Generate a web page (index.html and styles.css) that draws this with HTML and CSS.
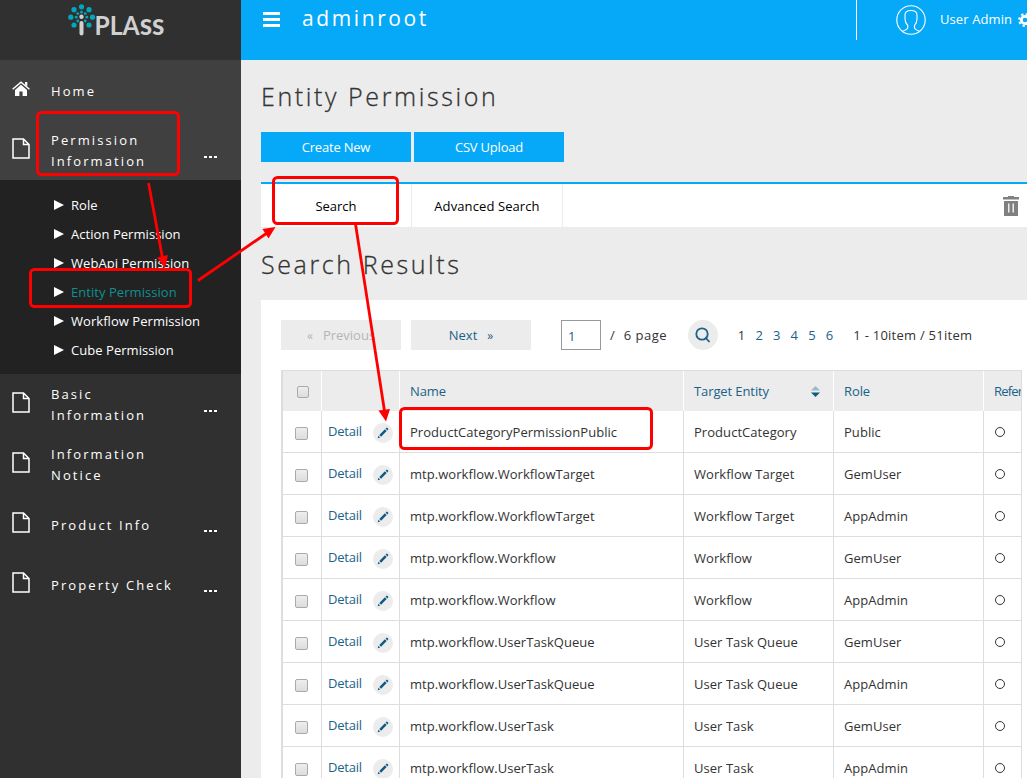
FILE: index.html
```html
<!DOCTYPE html>
<html lang="en">
<head>
    <meta charset="UTF-8">
    <meta name="viewport" content="width=device-width, initial-scale=1.0">
    <title>Entity Permission</title>
    <link rel="stylesheet" href="styles.css">
</head>
<body>
    <!-- shared icons -->
    <svg class="icon-defs">
        <symbol id="icon-doc" viewBox="0 0 18 21">
            <path d="M1 1h10.500l5.500 5.500V20H1zM11.500 1v5.500H17" fill="none" stroke="#fff" stroke-width="1.500"/>
        </symbol>
        <symbol id="icon-pen" viewBox="0 0 12 12">
            <path d="M.8 11.200l.6-2.400L3.200 10.600zM2.300 7.900L7.900 2.300 9.700 4.100 4.100 9.700zM8.600 1.600L9.500.7Q10 .4 10.500.9L11.100 1.500Q11.600 2 11.200 2.500L10.400 3.400z" fill="#0f5b85"/>
        </symbol>
    </svg>

    <div class="page">
        <aside class="sidebar">
            <div class="logo">
                <svg width="110" height="40" viewBox="0 0 110 40">
                    <g fill="#00a7bd">
                        <circle cx="15.500" cy="2.800" r="2.600"/>
                        <circle cx="8" cy="5.700" r="2.600"/>
                        <circle cx="23" cy="5.700" r="2.600"/>
                        <circle cx="4.800" cy="13.200" r="2.600"/>
                        <circle cx="26.500" cy="13.200" r="2.600"/>
                        <circle cx="8" cy="21" r="2.600"/>
                        <circle cx="23" cy="21" r="2.600"/>
                        <circle cx="15.500" cy="8" r="1.500"/>
                        <circle cx="11.800" cy="9.600" r="1.400"/>
                        <circle cx="19.200" cy="9.600" r="1.400"/>
                        <circle cx="10.200" cy="13.200" r="1.400"/>
                        <circle cx="20.800" cy="13.200" r="1.400"/>
                        <circle cx="11.800" cy="17" r="1.400"/>
                        <circle cx="19.200" cy="17" r="1.400"/>
                    </g>
                    <circle cx="15.500" cy="12.800" r="2.200" fill="#d0d0d0"/>
                    <path d="M15.500 19v10.500" stroke="#d0d0d0" stroke-width="4" stroke-linecap="round"/>
                    <text class="logo-text" x="28.500" y="31" textLength="70" lengthAdjust="spacingAndGlyphs">PLA<tspan class="logo-small">ss</tspan></text>
                </svg>
            </div>
            <nav class="menu">
                <a class="menu-item active">
                    <svg class="menu-icon home" width="18" height="16" viewBox="0 0 18 16">
                        <path d="M9 3.800L15 9v6h-4.400v-4.500H7.400V15H3V9z" fill="#fff"/>
                        <path d="M.6 8.300L9 1.200l8.400 7.100" fill="none" stroke="#fff" stroke-width="1.500"/>
                        <path d="M13 1h2.300v4.500L13 3.500z" fill="#fff"/>
                    </svg>
                    <span class="menu-label">Home</span>
                </a>
                <a class="menu-item active">
                    <svg class="menu-icon"><use href="#icon-doc"/></svg>
                    <span class="menu-label">Permission Information</span>
                    <span class="more"><i></i><i></i><i></i></span>
                </a>
                <ul class="submenu">
                    <li>Role</li>
                    <li>Action Permission</li>
                    <li>WebApi Permission</li>
                    <li class="current">Entity Permission</li>
                    <li>Workflow Permission</li>
                    <li>Cube Permission</li>
                </ul>
                <a class="menu-item">
                    <svg class="menu-icon"><use href="#icon-doc"/></svg>
                    <span class="menu-label">Basic Information</span>
                    <span class="more"><i></i><i></i><i></i></span>
                </a>
                <a class="menu-item">
                    <svg class="menu-icon"><use href="#icon-doc"/></svg>
                    <span class="menu-label">Information Notice</span>
                </a>
                <a class="menu-item">
                    <svg class="menu-icon"><use href="#icon-doc"/></svg>
                    <span class="menu-label">Product Info</span>
                    <span class="more"><i></i><i></i><i></i></span>
                </a>
                <a class="menu-item">
                    <svg class="menu-icon"><use href="#icon-doc"/></svg>
                    <span class="menu-label">Property Check</span>
                    <span class="more"><i></i><i></i><i></i></span>
                </a>
            </nav>
        </aside>

        <div class="main">
            <header class="topbar">
                <div class="burger"><i></i><i></i><i></i></div>
                <div class="tenant">adminroot</div>
                <div class="user">
                    <svg class="avatar" width="30" height="30" viewBox="0 0 30 30" fill="none" stroke="#fff" stroke-width="1.100">
                        <circle cx="15" cy="15" r="14.200"/>
                        <path d="M6.500 26.300Q11.800 24.500 11.800 22.500V20.500Q9 17.500 9 14V10Q9 5.500 15 5.500T21 10V14Q21 17.500 18.500 20.500V22.500Q18.500 24.500 23.500 26.300"/>
                    </svg>
                    <span class="user-name">User Admin</span>
                    <svg class="gear" width="14" height="14" viewBox="0 0 14 14" fill="none" stroke="#fff">
                        <circle cx="7" cy="7" r="3.700" stroke-width="2.800"/>
                        <circle cx="7" cy="7" r="5.900" stroke-width="2" stroke-dasharray="2.300 2.330"/>
                    </svg>
                </div>
            </header>

            <main class="content">
                <h2>Entity Permission</h2>
                <div class="actions">
                    <a class="btn">Create New</a>
                    <a class="btn">CSV Upload</a>
                </div>
                <div class="tabs">
                    <a class="tab">Search</a>
                    <a class="tab advanced">Advanced Search</a>
                    <svg class="trash" width="16" height="20" viewBox="0 0 16 20">
                        <path d="M0 1h5V0h6v1h5v2.500H0zM1 5h14v15H1z" fill="#808080"/>
                        <path d="M5.800 7.500v9M10.200 7.500v9" stroke="#fff" stroke-width="1.300"/>
                    </svg>
                </div>
                <h2 class="results-title">Search Results</h2>

                <div class="panel">
                    <div class="pager">
                        <a class="page-btn disabled"><small>«</small><span>Previous</span></a>
                        <a class="page-btn next"><span>Next</span><small>»</small></a>
                        <input class="page-no" type="text" value="1">
                        <span class="slash">/</span>
                        <span class="page-total">6 page</span>
                        <a class="go">
                            <svg width="16" height="16" viewBox="0 0 16 16" fill="none" stroke="#1a6288" stroke-width="1.800">
                                <circle cx="7" cy="7" r="5.700"/>
                                <path d="M10.300 10.300L14.500 15"/>
                            </svg>
                        </a>
                        <div class="page-links"><a class="on">1</a><a>2</a><a>3</a><a>4</a><a>5</a><a>6</a></div>
                        <span class="count">1 - 10item / 51item</span>
                    </div>

                    <div class="grid">
                        <table>
                            <thead>
                                <tr>
                                    <th class="check"><input type="checkbox"></th>
                                    <th class="link"></th>
                                    <th class="name">Name</th>
                                    <th class="target">
                                        <div class="sortable">Target Entity
                                            <svg width="9" height="11" viewBox="0 0 9 11">
                                                <path d="M0 4.500L4.500 0 9 4.500z" fill="#9db9c8"/>
                                                <path d="M0 6.500h9L4.500 11z" fill="#0f5b85"/>
                                            </svg>
                                        </div>
                                    </th>
                                    <th class="role">Role</th>
                                    <th class="ref">Refer</th>
                                </tr>
                            </thead>
                            <tbody>
                                <tr>
                                    <td class="check"><input type="checkbox"></td>
                                    <td class="link"><div><a>Detail</a><span class="edit"><svg><use href="#icon-pen"/></svg></span></div></td>
                                    <td>ProductCategoryPermissionPublic</td>
                                    <td>ProductCategory</td>
                                    <td>Public</td>
                                    <td><i class="ring"></i></td>
                                </tr>
                                <tr>
                                    <td class="check"><input type="checkbox"></td>
                                    <td class="link"><div><a>Detail</a><span class="edit"><svg><use href="#icon-pen"/></svg></span></div></td>
                                    <td>mtp.workflow.WorkflowTarget</td>
                                    <td>Workflow Target</td>
                                    <td>GemUser</td>
                                    <td><i class="ring"></i></td>
                                </tr>
                                <tr>
                                    <td class="check"><input type="checkbox"></td>
                                    <td class="link"><div><a>Detail</a><span class="edit"><svg><use href="#icon-pen"/></svg></span></div></td>
                                    <td>mtp.workflow.WorkflowTarget</td>
                                    <td>Workflow Target</td>
                                    <td>AppAdmin</td>
                                    <td><i class="ring"></i></td>
                                </tr>
                                <tr>
                                    <td class="check"><input type="checkbox"></td>
                                    <td class="link"><div><a>Detail</a><span class="edit"><svg><use href="#icon-pen"/></svg></span></div></td>
                                    <td>mtp.workflow.Workflow</td>
                                    <td>Workflow</td>
                                    <td>GemUser</td>
                                    <td><i class="ring"></i></td>
                                </tr>
                                <tr>
                                    <td class="check"><input type="checkbox"></td>
                                    <td class="link"><div><a>Detail</a><span class="edit"><svg><use href="#icon-pen"/></svg></span></div></td>
                                    <td>mtp.workflow.Workflow</td>
                                    <td>Workflow</td>
                                    <td>AppAdmin</td>
                                    <td><i class="ring"></i></td>
                                </tr>
                                <tr>
                                    <td class="check"><input type="checkbox"></td>
                                    <td class="link"><div><a>Detail</a><span class="edit"><svg><use href="#icon-pen"/></svg></span></div></td>
                                    <td>mtp.workflow.UserTaskQueue</td>
                                    <td>User Task Queue</td>
                                    <td>GemUser</td>
                                    <td><i class="ring"></i></td>
                                </tr>
                                <tr>
                                    <td class="check"><input type="checkbox"></td>
                                    <td class="link"><div><a>Detail</a><span class="edit"><svg><use href="#icon-pen"/></svg></span></div></td>
                                    <td>mtp.workflow.UserTaskQueue</td>
                                    <td>User Task Queue</td>
                                    <td>AppAdmin</td>
                                    <td><i class="ring"></i></td>
                                </tr>
                                <tr>
                                    <td class="check"><input type="checkbox"></td>
                                    <td class="link"><div><a>Detail</a><span class="edit"><svg><use href="#icon-pen"/></svg></span></div></td>
                                    <td>mtp.workflow.UserTask</td>
                                    <td>User Task</td>
                                    <td>GemUser</td>
                                    <td><i class="ring"></i></td>
                                </tr>
                                <tr>
                                    <td class="check"><input type="checkbox"></td>
                                    <td class="link"><div><a>Detail</a><span class="edit"><svg><use href="#icon-pen"/></svg></span></div></td>
                                    <td>mtp.workflow.UserTask</td>
                                    <td>User Task</td>
                                    <td>AppAdmin</td>
                                    <td><i class="ring"></i></td>
                                </tr>
                            </tbody>
                        </table>
                    </div>
                </div>
            </main>
        </div>
    </div>

    <!-- walkthrough marks -->
    <svg class="marks" width="1027" height="778" viewBox="0 0 1027 778">
        <g fill="none" stroke="#f00" stroke-width="3">
            <rect x="37.500" y="112.500" width="141" height="62" rx="4"/>
            <rect x="30.500" y="269.500" width="160" height="37" rx="4"/>
            <rect x="273.500" y="177.500" width="124" height="46" rx="4"/>
            <rect x="400.500" y="408.500" width="251" height="40" rx="4"/>
        </g>
        <g stroke="#f00" stroke-width="2.800">
            <path d="M148.500 183L162.500 258M198 280.500L267 233M355.500 224L384.500 411"/>
        </g>
        <g fill="#f00">
            <path d="M157 257.500L168 255L165 268z"/>
            <path d="M262.500 229L275.500 227L268.500 238.500z"/>
            <path d="M378.500 410.500L390 409L386 421.500z"/>
        </g>
    </svg>
</body>
</html>
```
FILE: styles.css
```css
* {
    box-sizing: border-box;
}
body {
    margin: 0;
    height: 778px;
    overflow: hidden;
    background: #ececec;
    color: #333;
    font-family: "Open Sans", "Noto Sans", sans-serif;
    font-size: 13px;
}
.icon-defs {
    display: none;
}
.page {
    display: flex;
    height: 778px;
}

/* sidebar */
.sidebar {
    flex: none;
    width: 241px;
    background: #303030;
    color: #fff;
}
.logo {
    height: 60px;
    padding: 4px 0 0 66px;
}
.logo svg {
    display: block;
    overflow: visible;
}
.logo-text {
    font-family: "Lato", sans-serif;
    font-size: 27px;
    font-weight: bold;
    fill: #d0d0d0;
}
.logo-small {
    font-size: 31px;
}
.menu-item {
    display: flex;
    height: 60px;
    padding: 0 24px 0 12px;
    align-items: center;
}
.menu-item.active {
    background: #404040;
}
.menu-icon {
    flex: none;
    width: 18px;
    height: 21px;
    margin-top: -3px;
}
.menu-icon.home {
    height: 16px;
}
.menu-label {
    width: 130px;
    margin-left: 21px;
    padding-top: 2px;
    line-height: 21px;
    letter-spacing: 2.1px;
}
.more {
    display: flex;
    gap: 2px;
    margin: 14px 0 0 auto;
}
.more i {
    width: 3px;
    height: 2px;
    background: #fff;
}
.submenu {
    height: 194px;
    margin: 0;
    padding: 10px 0 0 54px;
    list-style: none;
    background: #222;
}
.submenu li {
    display: flex;
    align-items: center;
    height: 29px;
    letter-spacing: 0.05px;
}
.submenu li::before {
    content: "";
    margin-right: 7px;
    border: 5.5px solid transparent;
    border-left: 10px solid #fff;
    border-right: 0;
}
.submenu .current {
    color: #0f8f8f;
}

/* header */
.main {
    flex: 1;
    min-width: 0;
}
.topbar {
    display: flex;
    height: 60px;
    background: #05a9f7;
    color: #fff;
}
.burger {
    display: flex;
    flex-direction: column;
    gap: 3px;
    margin: 12px 0 0 22px;
}
.burger i {
    width: 17px;
    height: 3px;
    background: #fff;
}
.tenant {
    margin: 4px 0 0 22px;
    font-size: 21px;
    line-height: 28px;
    letter-spacing: 2.6px;
}
.user {
    display: flex;
    flex: none;
    width: 171px;
    height: 40px;
    margin-left: auto;
    padding-left: 39px;
    border-left: 1px solid #fff;
    align-items: center;
}
.avatar {
    flex: none;
}
.user-name {
    flex: none;
    width: 73px;
    margin: -2px 5px 0 14px;
    letter-spacing: 0.1px;
    white-space: nowrap;
}
.gear {
    flex: none;
}

/* content */
.content {
    padding: 17px 0 0 20px;
}
h2 {
    height: 40px;
    margin: 0;
    font-size: 25px;
    font-weight: 300;
    line-height: 38px;
    letter-spacing: 2.6px;
    -webkit-text-stroke: 0.3px #333;
}
.actions {
    display: flex;
    gap: 3px;
    margin-top: 15px;
}
.btn {
    width: 150px;
    height: 30px;
    background: #05a9f7;
    color: #fff;
    letter-spacing: -0.2px;
    line-height: 30px;
    text-align: center;
}
.tabs {
    display: flex;
    height: 45px;
    margin-top: 20px;
    padding-right: 8px;
    border-top: 2px solid #05a9f7;
    background: #fff;
    align-items: center;
}
.tab {
    width: 151px;
    height: 43px;
    border-right: 1px solid #ececec;
    color: #000;
    line-height: 44px;
    text-align: center;
}
.advanced {
    letter-spacing: 0.1px;
}
.trash {
    margin-left: auto;
}
.results-title {
    margin-top: 18px;
}
.panel {
    height: 478px;
    margin-top: 15px;
    padding: 20px 5px 0 20px;
    background: #fff;
}

/* pager */
.pager {
    display: flex;
    height: 30px;
    align-items: center;
}
.page-btn {
    display: flex;
    width: 120px;
    height: 30px;
    margin-right: 10px;
    background: #ececec;
    color: #1a6288;
    align-items: center;
    justify-content: center;
    gap: 10px;
}
.page-btn small {
    font-size: 12px;
}
.page-btn.disabled {
    color: #b5b5b5;
}
.page-no {
    width: 40px;
    height: 30px;
    margin-left: 20px;
    padding: 2px 0 0 6px;
    border: 1px solid #999;
    color: #1a6288;
    font: inherit;
}
.slash {
    margin-left: 9px;
}
.page-total {
    width: 44px;
    margin-left: 9px;
    letter-spacing: 0.5px;
    white-space: nowrap;
}
.go {
    display: flex;
    width: 30px;
    height: 30px;
    margin-left: 20px;
    border-radius: 50%;
    background: #ececec;
    align-items: center;
    justify-content: center;
}
.page-links {
    display: flex;
    margin-left: 20px;
    color: #1a6288;
}
.page-links a {
    width: 17.6px;
}
.page-links .on {
    color: #333;
}
.count {
    margin-left: 10px;
    letter-spacing: 0.25px;
    white-space: nowrap;
}

/* result table */
.grid {
    height: 408px;
    margin-top: 20px;
    border: 1px solid #ddd;
    border-bottom: 0;
    overflow: hidden;
}
table {
    width: 850px;
    table-layout: fixed;
    border-spacing: 0;
    border-left: 1px solid #ddd;
}
th, td {
    height: 42px;
    padding: 0 10px;
    border-right: 1px solid #ddd;
    border-bottom: 1px solid #ddd;
    letter-spacing: 0.05px;
    text-align: left;
    white-space: nowrap;
}
th {
    height: 40px;
    border-right-color: #fff;
    border-bottom: 0;
    background: #ececec;
    color: #1a6288;
    font-weight: normal;
    letter-spacing: -0.1px;
}
.ref {
    padding-right: 0;
    letter-spacing: -0.8px;
}
.check {
    width: 39px;
    padding: 4px 0 0;
    text-align: center;
}
.check input {
    display: block;
    width: 13px;
    height: 13px;
    margin: 0 0 0 12px;
    appearance: none;
    border: 1px solid #aaa;
    border-radius: 2px;
    background: linear-gradient(#eee, #dcdcdc);
}
th.check {
    padding-top: 2px;
}
th.check input {
    width: 12px;
    height: 12px;
    margin-left: 14px;
}
.link {
    width: 78px;
    padding: 0 6px;
}
.link div {
    display: flex;
    align-items: center;
    justify-content: space-between;
    color: #1a6288;
}
.link a {
    margin-top: -2px;
    letter-spacing: -0.2px;
}
.edit {
    display: flex;
    width: 20px;
    height: 20px;
    margin-top: 2px;
    border-radius: 50%;
    background: #ececec;
    align-items: center;
    justify-content: center;
}
.edit svg {
    width: 12px;
    height: 12px;
}
.name {
    width: 284px;
}
.target, .role {
    width: 150px;
}
.sortable {
    display: flex;
    align-items: center;
    justify-content: space-between;
    padding-right: 3px;
}
.ring {
    display: block;
    width: 10px;
    height: 10px;
    margin-left: 1px;
    border: 1px solid #333;
    border-radius: 50%;
}

/* drawn over the page */
.marks {
    position: absolute;
    top: 0;
    left: 0;
}
```
